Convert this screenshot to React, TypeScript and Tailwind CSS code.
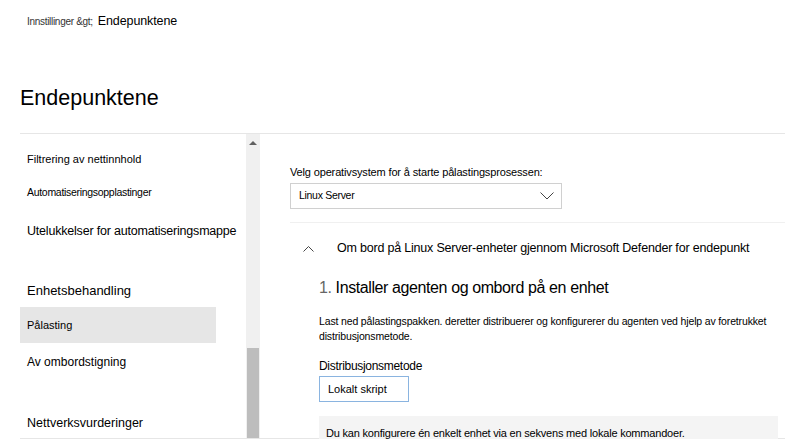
import React from 'react';

const navTop = [
  { label: 'Filtrering av nettinnhold', h: 'h-[30px]', size: 'text-[11px]' },
  { label: 'Automatiseringsopplastinger', h: 'h-[38px]', size: 'text-[10.5px] tracking-[-0.3px]' },
  { label: 'Utelukkelser for automatiseringsmappe', h: 'h-[39px]', size: 'text-[12.5px] tracking-[-0.2px]' },
];

function ChevronDown() {
  return (
    <svg width="14" height="8" viewBox="0 0 14 8" fill="none" stroke="#444" strokeWidth="1">
      <path d="M0.5 0.5 L7 7 L13.5 0.5" />
    </svg>
  );
}

function ChevronUp() {
  return (
    <svg width="11" height="6" viewBox="0 0 11 6" fill="none" stroke="#444" strokeWidth="1">
      <path d="M0.5 5.5 L5.5 0.5 L10.5 5.5" />
    </svg>
  );
}

export default function App() {
  return (
    <div className="h-[439px] w-[785px] overflow-hidden bg-white text-black font-['Liberation_Sans',Arial,sans-serif]">
      {/* breadcrumb */}
      <div className="flex items-baseline pl-[27px] pt-[12px] h-[40px]">
        <span className="text-[10px] tracking-[-0.3px] text-[#333]">Innstillinger &amp;gt;</span>
        <span className="ml-[5px] text-[12.5px] tracking-[-0.1px]">Endepunktene</span>
      </div>
      <h1 className="pl-[20px] pt-[44px] text-[21.5px] leading-[28px] h-[93px]">Endepunktene</h1>

      <div className="ml-[20px] border-t border-[#e6e6e6] flex h-[306px] border-b">
        {/* left nav */}
        <div className="w-[226px] flex flex-col pt-[10px] overflow-hidden">
          {navTop.map((n) => (
            <div key={n.label} className={`${n.h} shrink-0 flex items-center pl-[7px] ${n.size}`}>{n.label}</div>
          ))}
          <div className="mt-[23px] h-[33px] shrink-0 flex items-center pl-[7px] text-[13px]">Enhetsbehandling</div>
          <div className="h-[36px] w-[196px] shrink-0 bg-[#e6e6e6] flex items-center pl-[7px] text-[11px]">Pålasting</div>
          <div className="h-[38px] shrink-0 flex items-center pl-[7px] text-[12px]">Av ombordstigning</div>
          <div className="mt-[23px] h-[38px] shrink-0 flex items-center pl-[7px] text-[12.5px]">Nettverksvurderinger</div>
        </div>

        {/* scrollbar */}
        <div className="w-[14px] bg-[#f0f0f0] flex flex-col">
          <div className="h-[214px] flex justify-center pt-[7px]">
            <div className="w-0 h-0 border-l-[4px] border-r-[4px] border-b-[4px] border-l-transparent border-r-transparent border-b-[#606060]" />
          </div>
          <div className="flex-1 mx-[1px] bg-[#bdbdbd]" />
        </div>

        {/* content */}
        <div className="flex-1 pl-[30px] pt-[31px]">
          <div className="text-[11px] tracking-[-0.15px] leading-[14px]">Velg operativsystem for å starte pålastingsprosessen:</div>
          <div className="mt-[4px] w-[272px] h-[26px] border border-[#d0d0d0] flex items-center justify-between pl-[8px] pr-[7px]">
            <span className="text-[10.5px] tracking-[-0.3px]">Linux Server</span>
            <ChevronDown />
          </div>
          <div className="mt-[13px] border-t border-[#f0f0f0]" />
          <div className="h-[51px] flex items-center">
            <div className="w-[47px] pl-[13px] flex">
              <ChevronUp />
            </div>
            <span className="text-[12.5px] tracking-[-0.2px]">Om bord på Linux Server-enheter gjennom Microsoft Defender for endepunkt</span>
          </div>
          <div className="pl-[29px] pr-[7px]">
            <div className="text-[16px] leading-[22px] mt-[3px] tracking-[-0.4px]">
              <span className="text-[#666]">1.</span> Installer agenten og ombord på en enhet
            </div>
            <p className="mt-[15px] text-[10.5px] leading-[15px] tracking-[-0.15px]">
              Last ned pålastingspakken. deretter distribuerer og konfigurerer du agenten ved hjelp av foretrukket distribusjonsmetode.
            </p>
            <div className="mt-[15px] text-[12px] leading-[15px] tracking-[-0.3px]">Distribusjonsmetode</div>
            <div className="mt-[2px] w-[90px] h-[26px] border border-[#8ab4e0] flex items-center pl-[8px] text-[11px]">Lokalt skript</div>
            <div className="mt-[14px] bg-[#f4f4f4] h-[40px] pl-[7px] pt-[9px] text-[11px] tracking-[-0.2px]">
              Du kan konfigurere én enkelt enhet via en sekvens med lokale kommandoer.
            </div>
          </div>
        </div>
      </div>
    </div>
  );
}
